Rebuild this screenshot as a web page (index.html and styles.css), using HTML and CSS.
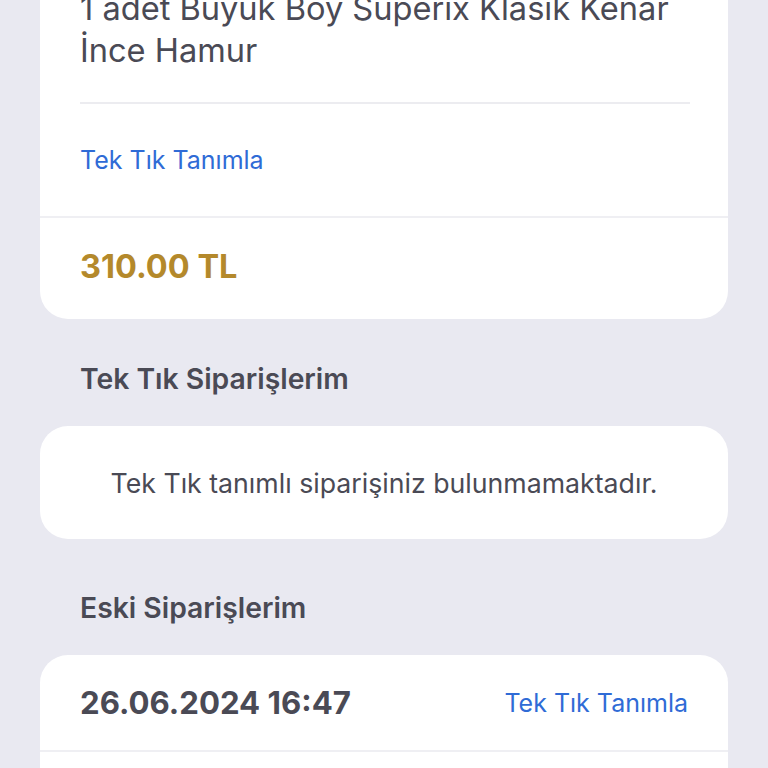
FILE: index.html
```html
<!DOCTYPE html>
<html lang="tr">
<head>
<meta charset="utf-8">
<link rel="stylesheet" href="styles.css">
</head>
<body>
<main class="page">
  <section class="card card-order">
    <div class="order-body">
      <p class="order-title">1 adet Büyük Boy Süperix Klasik Kenar İnce Hamur</p>
    </div>
    <div class="order-link-row">
      <a class="link">Tek Tık Tanımla</a>
    </div>
    <div class="price-row">
      <span class="price">310.00 TL</span>
    </div>
  </section>

  <h2 class="section-title first">Tek Tık Siparişlerim</h2>
  <section class="card card-empty">
    <p class="empty-text">Tek Tık tanımlı siparişiniz bulunmamaktadır.</p>
  </section>

  <h2 class="section-title second">Eski Siparişlerim</h2>
  <section class="card card-old">
    <div class="old-head">
      <span class="date">26.06.2024 16:47</span>
      <a class="link">Tek Tık Tanımla</a>
    </div>
    <div class="old-body"></div>
  </section>
</main>
</body>
</html>
```
FILE: styles.css
```css
* { box-sizing: border-box; }
html, body {
  margin: 0;
  padding: 0;
  background: #e9e9f1;
  height: 768px;
  overflow: hidden;
}
body {
  font-family: "Inter", "Noto Sans", sans-serif;
  color: #4a4a55;
}
.page {
  padding: 0 40px;
}
.card {
  background: #ffffff;
  border-radius: 28px;
}
.card-order {
  margin-top: -47px;
  border-top-left-radius: 0;
  border-top-right-radius: 0;
}
.order-body {
  padding: 0 38px 0 40px;
}
.order-title {
  margin: 0;
  padding: 34px 0 31px;
  font-size: 32.6px;
  line-height: 42px;
  border-bottom: 2px solid #ececf0;
}
.order-link-row {
  height: 114px;
  display: flex;
  align-items: center;
  padding: 0 40px;
  border-bottom: 2px solid #efeff3;
}
.link {
  color: #2f6bd6;
  font-size: 25px;
  text-decoration: none;
}
.price-row {
  height: 101px;
  display: flex;
  align-items: center;
  padding: 0 40px 4px;
}
.price {
  color: #b4892b;
  font-size: 32.5px;
  font-weight: 700;
}
.section-title {
  margin: 0;
  padding: 0 40px;
  font-size: 28.3px;
  font-weight: 600;
  line-height: 32px;
  color: #4a4a55;
}
.section-title.first {
  padding-top: 44px;
  padding-bottom: 31px;
}
.section-title.second {
  padding-top: 53px;
  padding-bottom: 31px;
}
.card-empty {
  height: 113px;
  display: flex;
  align-items: center;
  justify-content: center;
}
.empty-text {
  margin: 0;
  font-size: 26.7px;
}
.card-old {
  border-bottom-left-radius: 0;
  border-bottom-right-radius: 0;
  height: 200px;
}
.old-head {
  height: 97px;
  display: flex;
  align-items: center;
  justify-content: space-between;
  padding: 0 40px;
  border-bottom: 2px solid #efeff3;
}
.date {
  font-size: 31.2px;
  font-weight: 700;
}
```
